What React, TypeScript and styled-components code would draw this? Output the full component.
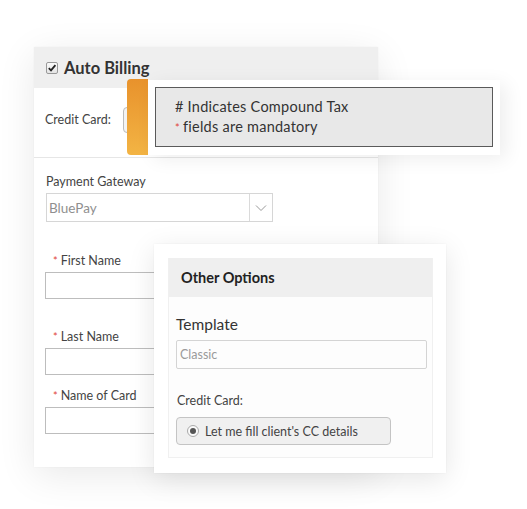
import React from "react";
import styled, { createGlobalStyle } from "styled-components";

const Global = createGlobalStyle`
  html, body { margin: 0; padding: 0; background: #ffffff; }
  body { font-family: "Lato", "Open Sans", sans-serif; color: #333; }
  * { box-sizing: border-box; }
`;

const Stage = styled.div`
  position: relative;
  width: 527px;
  height: 509px;
  overflow: hidden;
  padding: 47px 0 0 34px;
`;

const MainCard = styled.div`
  width: 344px;
  height: 420px;
  background: #fff;
  box-shadow: 0 8px 36px rgba(0, 0, 0, 0.09), 0 0 2px rgba(0, 0, 0, 0.04);
  display: flex;
  flex-direction: column;
`;

const CardHeader = styled.div`
  height: 41px;
  background: #efefef;
  display: flex;
  align-items: center;
  gap: 6px;
  padding-left: 12px;
  font-size: 16.5px;
  font-weight: 700;
  color: #333;
`;

const Check = styled.span`
  width: 12px;
  height: 12px;
  border: 1px solid #999;
  border-radius: 2px;
  background: linear-gradient(#fafafa, #e4e4e4);
  display: inline-flex;
  align-items: center;
  justify-content: center;
`;

const CCRow = styled.div`
  height: 70px;
  border-bottom: 1px solid #e6e6e6;
  display: flex;
  align-items: center;
  padding: 0 0 6px 11px;
  gap: 12px;
  font-size: 12.5px;
  color: #444;
`;

const HiddenInput = styled.div`
  width: 150px;
  height: 26px;
  border: 1px solid #bbb;
  border-radius: 4px;
  background: #f3f3f3;
`;

const Body = styled.div`
  padding: 16px 0 0 11px;
  display: flex;
  flex-direction: column;
`;

const Label = styled.div<{ $indent?: number; $top?: number }>`
  font-size: 12.5px;
  line-height: 16px;
  color: #444;
  padding-left: ${(p) => p.$indent ?? 1}px;
  margin-top: ${(p) => p.$top ?? 0}px;
  margin-bottom: 3px;
`;

const Req = styled.span`
  color: #e0443a;
  margin-right: 3px;
  font-size: 11px;
`;

const Select = styled.div`
  width: 227px;
  height: 29px;
  border: 1px solid #d6d6d6;
  display: flex;
  align-items: center;
  margin-left: 1px;
`;

const SelectValue = styled.div`
  flex: 1;
  padding-left: 2px;
  font-size: 13.5px;
  color: #8f8f8f;
`;

const SelectArrow = styled.div`
  width: 23px;
  height: 100%;
  border-left: 1px solid #dadada;
  display: flex;
  align-items: center;
  justify-content: center;
`;

const TextInput = styled.div`
  width: 230px;
  height: 27px;
  border: 1px solid #bdbdbd;
  background: #fff;
`;

const Tab = styled.div`
  position: absolute;
  left: 127px;
  top: 79px;
  width: 21px;
  height: 76px;
  border-radius: 4px 0 0 4px;
  background: linear-gradient(180deg, #e8922c 0%, #f3b444 100%);
`;

const Tip = styled.div`
  position: absolute;
  left: 148px;
  top: 80px;
  width: 352px;
  height: 75px;
  background: #fff;
  box-shadow: 6px 4px 18px rgba(0, 0, 0, 0.07);
  padding: 7px 7px 8px 7px;
`;

const TipInner = styled.div`
  height: 100%;
  width: 338px;
  background: #e8e8e8;
  border: 1px solid #5a5a5a;
  padding: 9px 0 0 19px;
  font-size: 14.5px;
  letter-spacing: 0.25px;
  line-height: 20px;
  color: #333;
`;

const Options = styled.div`
  position: absolute;
  left: 154px;
  top: 244px;
  width: 292px;
  height: 229px;
  background: #fff;
  box-shadow: 0 6px 26px rgba(0, 0, 0, 0.1), 0 0 2px rgba(0, 0, 0, 0.05);
  padding: 14px 13px 15px 14px;
`;

const Panel = styled.div`
  height: 100%;
  display: flex;
  flex-direction: column;
  border: 1px solid #f0f0f0;
  border-top: none;
  background: #fdfdfd;
`;

const PanelHeader = styled.div`
  height: 39px;
  background: #efefef;
  display: flex;
  align-items: center;
  padding-left: 12px;
  font-size: 14.5px;
  font-weight: 700;
  color: #222;
`;

const PanelBody = styled.div`
  padding: 17px 0 0 7px;
  display: flex;
  flex-direction: column;
`;

const TemplateLabel = styled.div`
  font-size: 15.5px;
  line-height: 20px;
  color: #333;
  margin-bottom: 6px;
`;

const TemplateInput = styled.div`
  width: 251px;
  height: 29px;
  border: 1px solid #d4d4d4;
  border-radius: 2px;
  display: flex;
  align-items: center;
  padding-left: 3px;
  font-size: 12.5px;
  color: #9a9a9a;
`;

const SmallLabel = styled.div`
  font-size: 12.5px;
  line-height: 16px;
  color: #444;
  margin-top: 24px;
  margin-bottom: 8px;
  padding-left: 1px;
`;

const RadioBox = styled.div`
  width: 215px;
  height: 28px;
  border: 1px solid #c4c4c4;
  border-radius: 4px;
  background: #f0f0f0;
  display: flex;
  align-items: center;
  gap: 6px;
  padding-left: 10px;
  font-size: 12.5px;
  color: #444;
`;

const Radio = styled.span`
  width: 12px;
  height: 12px;
  border-radius: 50%;
  border: 1px solid #aaa;
  background: #fafafa;
  display: inline-flex;
  align-items: center;
  justify-content: center;
  &::after {
    content: "";
    width: 6px;
    height: 6px;
    border-radius: 50%;
    background: #555;
  }
`;

export default function App() {
  return (
    <>
      <Global />
      <Stage>
        <MainCard>
          <CardHeader>
            <Check>
              <svg width="10" height="10" viewBox="0 0 10 10">
                <path d="M1.8 5.2 L4 7.4 L8.4 2.2" stroke="#222" strokeWidth="1.8" fill="none" />
              </svg>
            </Check>
            Auto Billing
          </CardHeader>
          <CCRow>
            Credit Card:
            <HiddenInput />
          </CCRow>
          <Body>
            <Label>Payment Gateway</Label>
            <Select>
              <SelectValue>BluePay</SelectValue>
              <SelectArrow>
                <svg width="12" height="8" viewBox="0 0 12 8">
                  <path d="M1 1.5 L6 6.5 L11 1.5" stroke="#999" strokeWidth="1" fill="none" />
                </svg>
              </SelectArrow>
            </Select>
            <Label $indent={8} $top={31}>
              <Req>*</Req>First Name
            </Label>
            <TextInput />
            <Label $indent={8} $top={30}>
              <Req>*</Req>Last Name
            </Label>
            <TextInput />
            <Label $indent={8} $top={13}>
              <Req>*</Req>Name of Card
            </Label>
            <TextInput />
          </Body>
        </MainCard>

        <Tab />
        <Tip>
          <TipInner>
            # Indicates Compound Tax
            <br />
            <Req>*</Req>fields are mandatory
          </TipInner>
        </Tip>

        <Options>
          <Panel>
            <PanelHeader>Other Options</PanelHeader>
            <PanelBody>
              <TemplateLabel>Template</TemplateLabel>
              <TemplateInput>Classic</TemplateInput>
              <SmallLabel>Credit Card:</SmallLabel>
              <RadioBox>
                <Radio />
                Let me fill client's CC details
              </RadioBox>
            </PanelBody>
          </Panel>
        </Options>
      </Stage>
    </>
  );
}
